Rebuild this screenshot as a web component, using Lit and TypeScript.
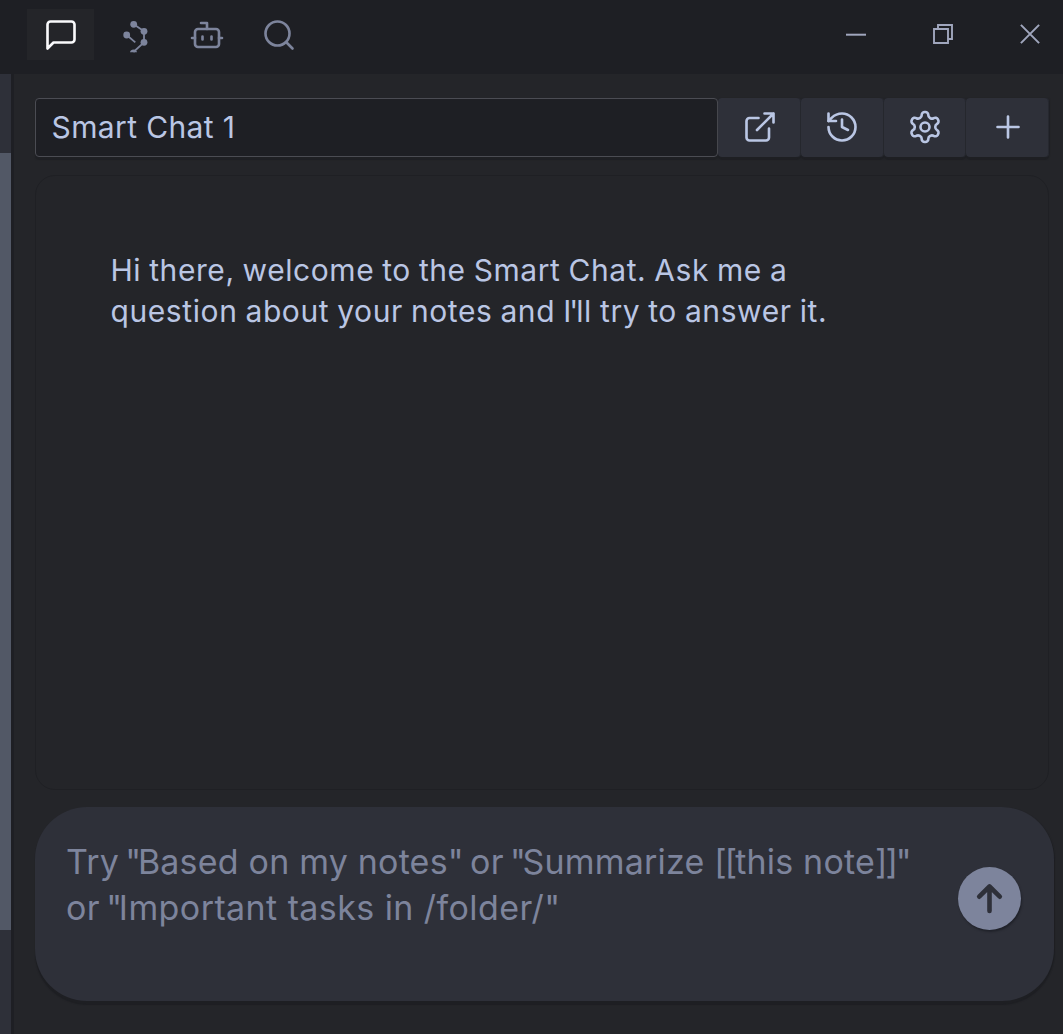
import { LitElement, html, css, svg } from "lit";
import { customElement } from "lit/decorators.js";

const icon = (body: unknown, cls = "icon") =>
  html`<svg class=${cls} viewBox="0 0 24 24" aria-hidden="true">${body}</svg>`;

const chatIcon = svg`<path d="M21 15a2 2 0 0 1-2 2H7l-4 4V5a2 2 0 0 1 2-2h14a2 2 0 0 1 2 2z"/>`;
const botIcon = svg`<path d="M12 8V4H8"/><rect width="16" height="12" x="4" y="8" rx="2"/><path d="M2 14h2M20 14h2M15 13v2M9 13v2"/>`;
const searchIcon = svg`<circle cx="11" cy="11" r="8"/><path d="m21 21-4.3-4.3"/>`;
const openIcon = svg`<path d="M15 3h6v6M10 14 21 3M18 13v6a2 2 0 0 1-2 2H5a2 2 0 0 1-2-2V8a2 2 0 0 1 2-2h6"/>`;
const historyIcon = svg`<path d="M3 12a9 9 0 1 0 9-9 9.75 9.75 0 0 0-6.74 2.74L3 8"/><path d="M3 3v5h5M12 7v5l4 2"/>`;
const gearIcon = svg`<path d="M12.22 2h-.44a2 2 0 0 0-2 2v.18a2 2 0 0 1-1 1.730l-.43.25a2 2 0 0 1-2 0l-.15-.08a2 2 0 0 0-2.730.73l-.22.38a2 2 0 0 0 .73 2.730l.15.1a2 2 0 0 1 1 1.720v.51a2 2 0 0 1-1 1.740l-.15.09a2 2 0 0 0-.73 2.730l.22.38a2 2 0 0 0 2.730.73l.15-.08a2 2 0 0 1 2 0l.43.25a2 2 0 0 1 1 1.730V20a2 2 0 0 0 2 2h.44a2 2 0 0 0 2-2v-.18a2 2 0 0 1 1-1.730l.43-.25a2 2 0 0 1 2 0l.15.08a2 2 0 0 0 2.730-.73l.22-.39a2 2 0 0 0-.73-2.730l-.15-.08a2 2 0 0 1-1-1.740v-.5a2 2 0 0 1 1-1.740l.15-.09a2 2 0 0 0 .73-2.730l-.22-.38a2 2 0 0 0-2.730-.73l-.15.08a2 2 0 0 1-2 0l-.43-.25a2 2 0 0 1-1-1.730V4a2 2 0 0 0-2-2z"/><circle cx="12" cy="12" r="3"/>`;
const plusIcon = svg`<path d="M5 12h14M12 5v14"/>`;

@customElement("app-root")
export class AppRoot extends LitElement {
  static styles = css`
    :host {
      display: flex;
      flex-direction: column;
      height: 1034px;
      overflow: hidden;
      background: #242529;
      color: #bac6e4;
      font-family: Inter, "Liberation Sans", sans-serif;
    }
    * { box-sizing: border-box; }
    svg { display: block; fill: none; flex: none; }
    .icon {
      width: 36px;
      height: 36px;
      stroke: currentColor;
      stroke-width: 1.75;
      stroke-linecap: round;
      stroke-linejoin: round;
    }
    .titlebar {
      display: flex;
      justify-content: space-between;
      height: 74px;
      flex: none;
      background: #1e1f24;
      color: #7d849c;
    }
    .tabs { display: flex; gap: 6px; padding: 9px 0 0 27px; }
    .tab {
      display: flex;
      align-items: center;
      justify-content: center;
      width: 67px;
      height: 51px;
    }
    .tab.active { background: #242529; color: #fafafc; }
    .tab:nth-child(2) { padding-right: 2px; }
    .tab:last-child { margin-left: -1px; }
    .window {
      display: flex;
      gap: 67px;
      padding: 24px 23px 0 0;
      color: #a0a6bd;
    }
    .win { width: 20px; height: 20px; stroke: currentColor; overflow: visible; }
    .body { display: flex; flex: 1; min-height: 0; }
    .track {
      width: 14px;
      flex: none;
      background: #2e3039;
      border-right: 3px solid #1e1f24;
      padding-top: 79px;
    }
    .thumb { height: 777px; background: #525866; }
    .chat {
      flex: 1;
      display: flex;
      flex-direction: column;
      padding: 24px 9px 0 21px;
    }
    .toolbar { display: flex; width: 1014px; height: 59px; }
    .name {
      width: 683px;
      flex: none;
      border: 1px solid #4b4c53;
      border-radius: 4px;
      background: #1e1f24;
      box-shadow: 0 3px 1px #1f2024;
      padding-left: 15.5px;
      font-size: 30px;
      line-height: 57px;
      letter-spacing: 0.38px;
    }
    .action {
      flex: 0 0 82.75px;
      display: flex;
      align-items: center;
      justify-content: center;
      padding-bottom: 2px;
      background: #2e3039;
      border-radius: 4px;
      box-shadow: inset -1px 0 0 #26282f, 0 3px 1px #1e1f23, 1px 0 1px #202126;
    }
    .name + .action { padding-left: 1px; }
    .thread {
      margin-top: 18px;
      width: 1014px;
      height: 615px;
      border: 1px solid #1f2024;
      border-radius: 20px;
      padding: 74px 74.5px;
      font-size: 30px;
      line-height: 41px;
      white-space: nowrap;
    }
    .line { display: block; }
    .composer {
      margin-top: 17px;
      display: flex;
      justify-content: space-between;
      width: 1019px;
      height: 194px;
      border-radius: 52px;
      background: #2e3039;
      box-shadow: 0 4px 1px #1e1f23, 1px 1px 1px #1e1f23;
      padding: 32px 33px 0 31px;
      color: #7d849c;
      font-size: 34px;
      line-height: 46px;
      white-space: nowrap;
    }
    .send {
      margin-top: 28px;
      width: 63px;
      height: 63px;
      border-radius: 50%;
      background: #7d849c;
      box-shadow: 1px 2px 2px #20222a;
      color: #2e3039;
    }
    .arrow { width: 63px; height: 63px; stroke: currentColor; stroke-width: 4.6; stroke-linecap: round; stroke-linejoin: round; }
    .m1 { letter-spacing: 0.57px; word-spacing: -1px; }
    .m2 { letter-spacing: 0.59px; word-spacing: -1px; }
    .p1 { letter-spacing: 0.2px; }
    .p2 { letter-spacing: 0.42px; }
    .quote { letter-spacing: -3.3px; }
    .bracket { letter-spacing: -2px; }
    .tight { letter-spacing: -2px; }
  `;

  render() {
    const q = html`<span class="quote">"</span>`;
    const o = html`<span class="quote"> "</span>`;
    return html`
      <header class="titlebar">
        <nav class="tabs">
          <div class="tab active">${icon(chatIcon)}</div>
          <div class="tab">
            <svg width="36" height="36" viewBox="0 0 36 36">
              <g stroke="currentColor" stroke-width="1.8">
                <path d="M18.7 7.300 29 14.300v11L18.400 35M11.700 18l8.600 7.400"/>
              </g>
              <g fill="currentColor">
                <circle cx="18.7" cy="7.3" r="3.4"/><circle cx="29" cy="14.3" r="3.4"/>
                <circle cx="29" cy="25.3" r="3.4"/><circle cx="11.7" cy="18" r="3.4"/>
                <path d="M15 35.300a3.600 3.600 0 0 1 7 0z"/>
              </g>
            </svg>
          </div>
          <div class="tab">${icon(botIcon)}</div>
          <div class="tab">${icon(searchIcon)}</div>
        </nav>
        <div class="window">
          <svg class="win" viewBox="0 0 20 20"><path stroke-width="2" d="M0 10.700h20"/></svg>
          <svg class="win" viewBox="0 0 20 20" stroke-width="1.9"><path d="M1 5h14v14H1zM5 5V1h14v14h-4"/></svg>
          <svg class="win" viewBox="0 0 20 20" stroke-width="2"><path d="m.9.9 18.200 18.200M19.100.9.9 19.100"/></svg>
        </div>
      </header>
      <div class="body">
        <div class="track"><div class="thumb"></div></div>
        <main class="chat">
          <div class="toolbar">
            <div class="name">Smart Chat 1</div>
            <div class="action">${icon(openIcon)}</div>
            <div class="action">${icon(historyIcon)}</div>
            <div class="action">${icon(gearIcon)}</div>
            <div class="action">${icon(plusIcon)}</div>
          </div>
          <section class="thread">
            <span class="line m1">Hi there, welcome to the Smart Chat. Ask me a</span>
            <span class="line m2">question about your notes and <span class="tight">I'</span>ll try to answer it.</span>
          </section>
          <div class="composer">
            <div>
              <span class="line p1">Try${o}Based on my notes${q} or${o}Summarize <span class="bracket">[[</span>this note<span class="bracket">]]</span>${q}</span>
              <span class="line p2">or${o}Important tasks in /folder/${q}</span>
            </div>
            <div class="send">
              <svg class="arrow" viewBox="0 0 63 63"><path d="M31.500 44V19.500M21.200 29.700l10.300-10.200 10.300 10.200"/></svg>
            </div>
          </div>
        </main>
      </div>
    `;
  }
}
